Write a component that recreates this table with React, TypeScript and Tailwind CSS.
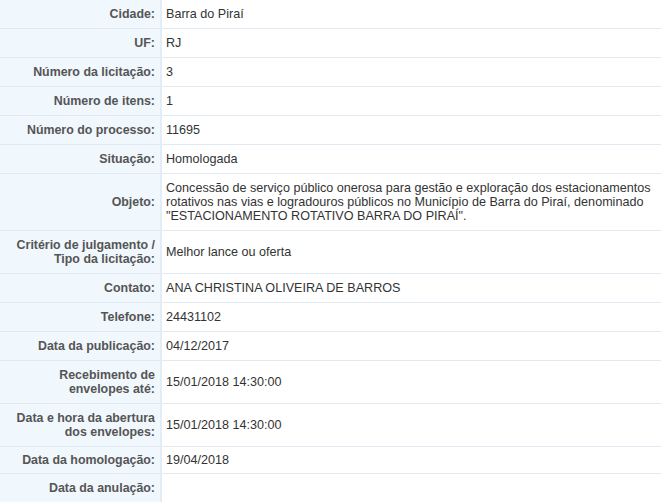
const rows: { label: string[]; value: string[]; tight?: boolean }[] = [
  { label: ["Cidade:"], value: ["Barra do Piraí"] },
  { label: ["UF:"], value: ["RJ"] },
  { label: ["Número da licitação:"], value: ["3"] },
  { label: ["Número de itens:"], value: ["1"] },
  { label: ["Número do processo:"], value: ["11695"] },
  { label: ["Situação:"], value: ["Homologada"] },
  {
    label: ["Objeto:"],
    value: [
      "Concessão de serviço público onerosa para gestão e exploração dos estacionamentos",
      "rotativos nas vias e logradouros públicos no Município de Barra do Piraí, denominado",
      "\"ESTACIONAMENTO ROTATIVO BARRA DO PIRAÍ\".",
    ],
  },
  { label: ["Critério de julgamento /", "Tipo da licitação:"], value: ["Melhor lance ou oferta"] },
  { label: ["Contato:"], value: ["ANA CHRISTINA OLIVEIRA DE BARROS"] },
  { label: ["Telefone:"], value: ["24431102"] },
  { label: ["Data da publicação:"], value: ["04/12/2017"] },
  { label: ["Recebimento de", "envelopes até:"], value: ["15/01/2018 14:30:00"] },
  { label: ["Data e hora da abertura", "dos envelopes:"], value: ["15/01/2018 14:30:00"] },
  { label: ["Data da homologação:"], value: ["19/04/2018"], tight: true },
  { label: ["Data da anulação:"], value: [] },
];

export default function App() {
  return (
    <div className="h-[502px] w-[661px] overflow-hidden bg-white font-['Liberation_Sans',Arial,sans-serif] leading-[14px]">
      <table className="w-full border-collapse">
        <tbody>
          {rows.map((row, i) => (
            <tr key={i} className={i === 0 ? "" : "border-t border-[#e1e9f2]"}>
              <td
                className={`w-[161px] border-r-2 border-[#e4edf6] bg-[#f0f7fd] pr-[5px] text-right align-middle text-[12.4px] font-bold text-[#555] ${
                  row.tight ? "py-[6px]" : "py-[7px]"
                }`}
              >
                {row.label.map((l) => (
                  <div key={l} className="whitespace-nowrap">{l}</div>
                ))}
              </td>
              <td className={`pl-[4px] align-middle text-[12.6px] text-[#333] ${row.tight ? "py-[6px]" : "py-[7px]"}`}>
                {row.value.length === 0 ? (
                  <div>&nbsp;</div>
                ) : (
                  row.value.map((v) => (
                    <div key={v} className="whitespace-nowrap">{v}</div>
                  ))
                )}
              </td>
            </tr>
          ))}
        </tbody>
      </table>
    </div>
  );
}
